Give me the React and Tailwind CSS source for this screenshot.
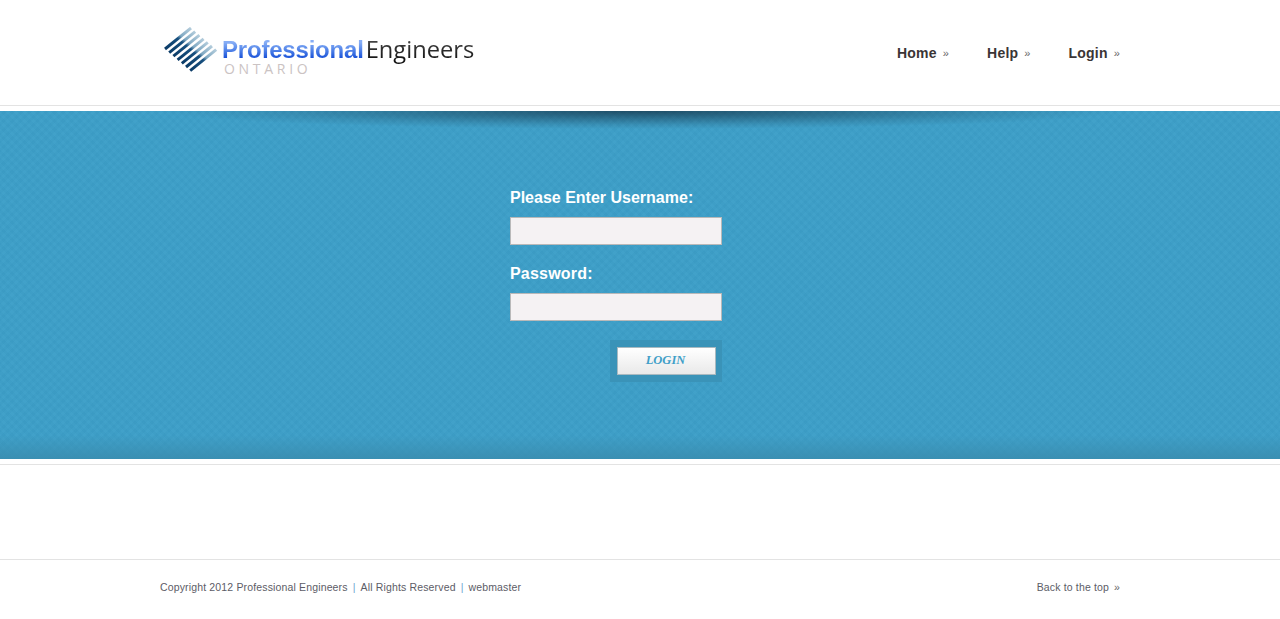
const sans = 'font-["Liberation_Sans",Arial,sans-serif]'

const Logo = () => {
  const stripes = [0, 1, 2, 3, 4, 5, 6]
  return (
    <div className="flex items-start">
      <svg width="54" height="46" viewBox="0 0 54 46" className="mt-[27px] ml-1 shrink-0">
        <defs>
          <linearGradient id="stripe" x1="0" y1="1" x2="1" y2="0">
            <stop offset="0" stopColor="#0a3a66" />
            <stop offset="0.5" stopColor="#17507f" />
            <stop offset="0.62" stopColor="#7fa8c2" />
            <stop offset="1" stopColor="#b4cddc" />
          </linearGradient>
        </defs>
        {stripes.map((i) => (
          <line
            key={i}
            x1={1 + i * 4.2}
            y1={22 + i * 3.6}
            x2={27 + i * 4.2}
            y2={1 + i * 3.6}
            stroke="url(#stripe)"
            strokeWidth="3"
          />
        ))}
      </svg>
      <div className="ml-1 mt-[34px] flex flex-col">
        <div className="flex items-baseline">
          <span className="font-['Liberation_Sans',sans-serif] font-bold text-[24px] leading-[30px] tracking-[-0.2px] bg-gradient-to-b from-[#86adf5] from-25% to-[#114ad6] to-80% bg-clip-text text-transparent">
            Professional
          </span>
          <span className="font-['Open_Sans',sans-serif] font-medium text-[23.7px] leading-[30px] ml-[2px] bg-gradient-to-b from-[#555555] to-[#0c0c0c] bg-clip-text text-transparent">
            Engineers
          </span>
        </div>
        <span className="font-['Open_Sans',sans-serif] font-medium text-[14px] leading-[12px] tracking-[3.7px] text-[#cbc3c3] -mt-[2px] ml-[2px]">
          ONTARIO
        </span>
      </div>
    </div>
  )
}

const Header = () => {
  return (
    <header className="h-[106px] border-b border-[#e3e3e3] bg-white">
      <div className="w-[960px] mx-auto flex justify-between items-start">
        <Logo />
        <nav className={`${sans} flex gap-[38px] pt-[44px] text-[14px] leading-[18px] font-bold tracking-[0.2px] text-[#3a3535]`}>
          {['Home', 'Help', 'Login'].map((item) => (
            <a key={item} className="flex items-center">
              {item}
              <span className="ml-[6px] text-[11px] font-normal text-[#666666]">»</span>
            </a>
          ))}
        </nav>
      </div>
    </header>
  )
}

const LoginPanel = () => {
  return (
    <section className="relative mt-[5px] h-[348px] bg-[#3d9fc8] bg-[repeating-linear-gradient(45deg,rgba(0,0,0,0.01)_0_3px,rgba(255,255,255,0.01)_3px_6px),repeating-linear-gradient(-45deg,rgba(0,0,0,0.01)_0_3px,rgba(255,255,255,0.01)_3px_6px)]">
      {/* shadow under the header */}
      <div className="absolute inset-x-0 top-0 h-[18px] bg-[radial-gradient(ellipse_480px_18px_at_640px_0,rgba(20,50,70,0.75),rgba(20,50,70,0.15)_75%,transparent)]" />
      <div className="absolute inset-x-0 bottom-0 h-[24px] bg-gradient-to-b from-transparent to-[#3a8fb2]" />
      <form className={`${sans} relative w-[212px] ml-[510px] pt-[77px] flex flex-col`}>
        <label className="text-[16px] leading-[20px] font-bold text-white">Please Enter Username:</label>
        <input className="mt-[9px] h-[28px] border border-[#b9b9b9] bg-[#f5f2f3]" />
        <label className="mt-[19px] text-[16px] leading-[20px] font-bold tracking-[0.2px] text-white">Password:</label>
        <input type="password" className="mt-[9px] h-[28px] border border-[#b9b9b9] bg-[#f5f2f3]" />
        <div className="mt-[19px] self-end w-[112px] h-[42px] pl-[7px] pt-[7px] bg-[#3a93b8]">
          <button
            type="button"
            className="w-[99px] h-[28px] pr-[2px] pb-[2px] border border-[#a9b9c0] bg-gradient-to-b from-white to-[#e9e9e9] font-['Liberation_Serif',serif] italic font-bold text-[12.5px] text-[#3f9fc8]"
          >
            LOGIN
          </button>
        </div>
      </form>
    </section>
  )
}

const Footer = () => {
  return (
    <footer className="mt-[94px] border-t border-[#e3e3e3] bg-white">
      <div className={`${sans} w-[960px] mx-auto flex justify-between pt-[20px] text-[10.5px] leading-[15px] tracking-[0.15px] text-[#5c5c66]`}>
        <p>
          Copyright 2012 Professional Engineers
          <span className="mx-[5px] text-[#6fa8d0]">|</span>
          All Rights Reserved
          <span className="mx-[5px] text-[#6fa8d0]">|</span>
          webmaster
        </p>
        <a>
          Back to the top
          <span className="ml-[5px] text-[#666666]">»</span>
        </a>
      </div>
    </footer>
  )
}

export default function App() {
  return (
    <div className="min-h-[619px] bg-white overflow-hidden">
      <Header />
      <LoginPanel />
      <div className="mt-[5px] h-px bg-[#e3e3e3]" />
      <Footer />
    </div>
  )
}
